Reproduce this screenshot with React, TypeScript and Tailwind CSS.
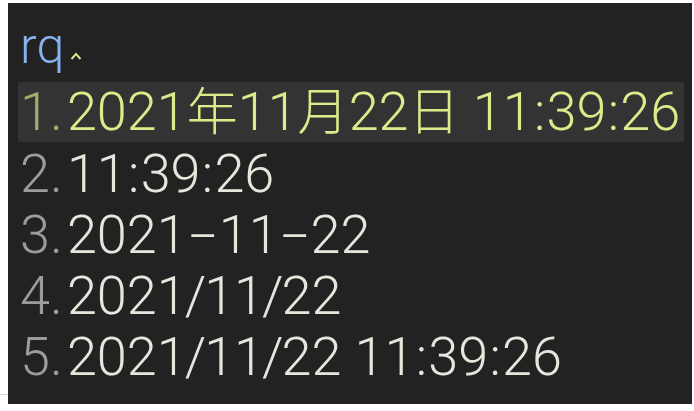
const items = [
  { n: '1', text: '2021年11月22日 11:39:26' },
  { n: '2', text: '11:39:26' },
  { n: '3', text: '2021-11-22' },
  { n: '4', text: '2021/11/22' },
  { n: '5', text: '2021/11/22 11:39:26' },
];

const isCjk = (s: string) => /[\u4e00-\u9fff]/.test(s);

// tweak glyph widths a bit so the line lengths match the IME font
function Glyph({ c }: { c: string }) {
  if (isCjk(c)) return <span className="text-[51px]">{c}</span>;
  if (c === ':') return <span className="mx-[1.25px]">{c}</span>;
  if (c === '/') return <span className="-mx-[2px]">{c}</span>;
  if (c === '-')
    return <span className="inline-block w-[32px] text-center scale-x-[1.8]">{c}</span>;
  return <>{c}</>;
}

export default function App() {
  const selected = '1';

  return (
    <div className="w-[694px] h-[411px] bg-white overflow-hidden">
      <div
        className="ml-[8px] mt-[3px] w-[684px] h-[401px] bg-[#222222] pt-[18px] pl-[10px] pr-[8px] font-light"
        style={{ fontFamily: 'Roboto, "Noto Sans CJK SC", sans-serif' }}
      >
        {/* input */}
        <div className="flex items-start h-[61px] pl-[2px]">
          <span className="text-[50px] leading-[50px] text-[#86b3ef]">rq</span>
          <svg width="12" height="8" viewBox="0 0 12 8" className="ml-[6px] mt-[31px]">
            <path d="M1.5 7 L6 2 L10.5 7" fill="none" stroke="#d2e68a" strokeWidth="2" />
          </svg>
        </div>

        {/* candidates */}
        <div className="flex flex-col">
          {items.map((it) => {
            const active = it.n === selected;
            return (
              <div
                key={it.n}
                className={`flex items-center pl-[2px] whitespace-nowrap rounded-[2px] ${
                  active ? 'bg-[#333333] h-[60px] mb-px' : 'h-[61px]'
                }`}
              >
                <span
                  className={`text-[54px] leading-none mr-[4px] ${
                    active ? 'text-[#a4ac6c]' : 'text-[#9c9c9c]'
                  }`}
                >
                  {it.n}.
                </span>
                <span className={`text-[54px] leading-none ${active ? 'text-[#d8ec8a]' : 'text-[#e8e6dc]'}`}>
                  {Array.from(it.text).map((c, i) => (
                    <Glyph key={i} c={c} />
                  ))}
                </span>
              </div>
            );
          })}
        </div>
      </div>
      <div className="w-[8px] h-px bg-[#d8d8d8] -mt-[10px]" />
    </div>
  );
}
